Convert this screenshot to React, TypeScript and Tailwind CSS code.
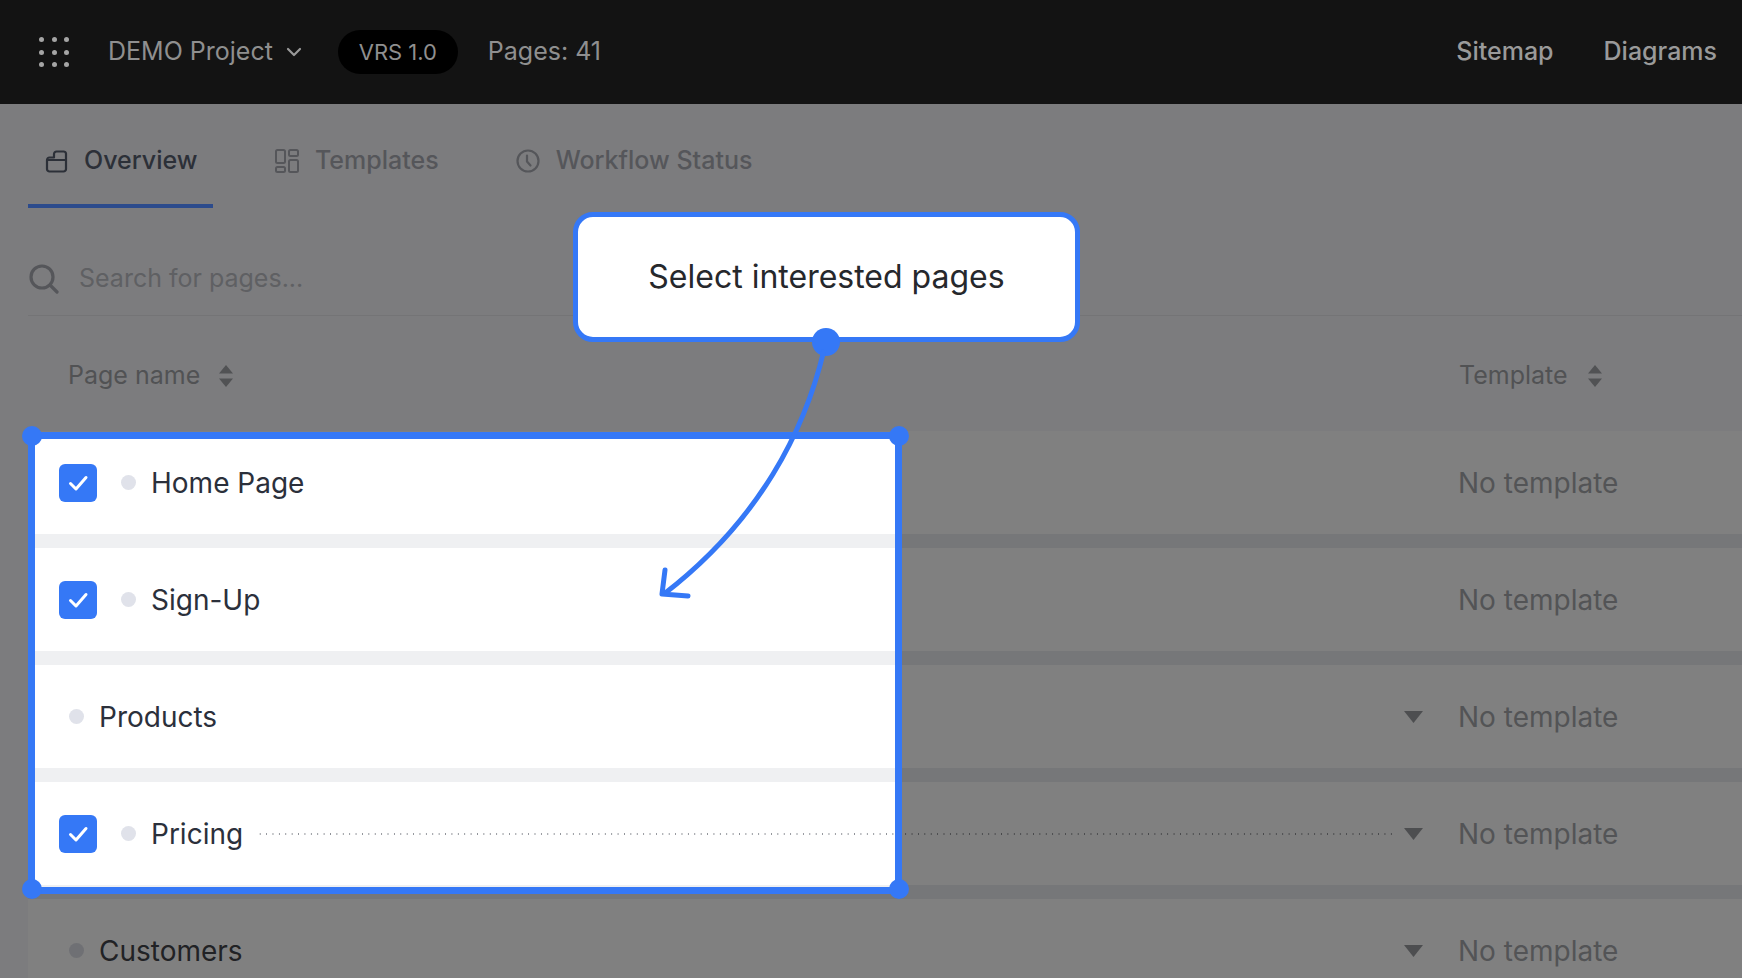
import React from "react";

interface Page {
  name: string;
  checked?: boolean;
  caret?: boolean;
  dotted?: boolean;
}

const pages: Page[] = [
  { name: "Home Page", checked: true },
  { name: "Sign-Up", checked: true },
  { name: "Products", caret: true },
  { name: "Pricing", checked: true, caret: true, dotted: true },
  { name: "Customers", caret: true },
];

const SortIcon = () => (
  <svg width="16" height="24" viewBox="0 0 16 24" className="fill-[#515254]">
    <path d="M8 1 15 9.500H1Z" />
    <path d="M8 23 15 14.500H1Z" />
  </svg>
);

const Check = () => (
  <svg width="24" height="24" viewBox="0 0 24 24" fill="none" stroke="white" strokeWidth="3" strokeLinecap="round" strokeLinejoin="round">
    <path d="M4.500 12.500 10 18 20 6.500" />
  </svg>
);

const Rows = ({ lit }: { lit?: boolean }) => (
  <div className="flex flex-col">
    {pages.map((p) => (
      <div
        key={p.name}
        className={`flex h-[117px] items-center border-b-[14px] text-[28px] ${
          lit
            ? "border-[#eff0f2] bg-white text-[#2b303b]"
            : "border-[#767779] bg-[#808080] text-[#212225]"
        }`}
      >
        {p.checked && (
          <div className="ml-[31px] mr-[24px] flex h-[38px] w-[38px] items-center justify-center rounded-[6px] bg-[#3578f6]">
            <Check />
          </div>
        )}
        <div
          className={`h-[15px] w-[15px] rounded-full ${p.checked ? "" : "ml-[41px]"} ${
            lit ? "bg-[#e0e2ea]" : "bg-[#6f7074]"
          }`}
        />
        <span className="ml-[8px] pl-[7px]">{p.name}</span>
        {p.dotted ? (
          <div
            className={`ml-[14px] mr-[12px] h-[2px] flex-1 bg-[length:6.400px_2px] ${
              lit
                ? "bg-[radial-gradient(circle,#8d9096_1px,transparent_1px)]"
                : "bg-[radial-gradient(circle,#47484a_1px,transparent_1px)]"
            }`}
          />
        ) : (
          <div className="flex-1" />
        )}
        {p.caret && (
          <svg width="19" height="12" viewBox="0 0 19 12" className="fill-[#4d4e50]">
            <path d="M0 0H19L9.500 12Z" />
          </svg>
        )}
        <span className={`ml-[35px] w-[284px] ${lit ? "text-[#9a9a9a]" : "text-[#535456]"}`}>No template</span>
      </div>
    ))}
  </div>
);

export default function App() {
  return (
    <div className="relative h-[978px] w-[1742px] overflow-hidden bg-[#7c7c7e] font-['Inter',sans-serif]">
      {/* top bar */}
      <header className="flex h-[104px] items-center bg-[#131313] text-[25px]">
        <div className="ml-[39px] grid grid-cols-3 gap-[7.500px]">
          {Array.from({ length: 9 }).map((_, i) => (
            <span key={i} className="h-[5px] w-[5px] rounded-full bg-[#a5a5a5]" />
          ))}
        </div>
        <span className="ml-[39px] text-[#8f8f8f]">DEMO Project</span>
        <svg width="16" height="10" viewBox="0 0 16 10" fill="none" stroke="#999" strokeWidth="2.200" strokeLinecap="round" strokeLinejoin="round" className="ml-[13px]">
          <path d="M2 2 8 8 14 2" />
        </svg>
        <div className="ml-[36px] flex h-[44px] w-[120px] items-center justify-center rounded-full bg-black text-[22px] text-[#8f8f8f]">
          VRS 1.0
        </div>
        <span className="ml-[30px] text-[#8f8f8f]">Pages: 41</span>
        <span className="ml-auto font-medium text-[#9a9a9a]">Sitemap</span>
        <span className="ml-[50px] mr-[25px] font-medium text-[#9a9a9a]">Diagrams</span>
      </header>

      {/* tabs */}
      <nav className="flex h-[104px] pl-[28px] text-[25px] font-medium">
        <div className="flex w-[185px] items-center border-b-4 border-[#2c4b8c] pl-[17px] pt-[14px] text-[#2c3038]">
          <svg width="23" height="23" viewBox="0 0 23 23" fill="none" stroke="#2c3038" strokeWidth="2.200" strokeLinejoin="round">
            <path d="M2 10V19A2.500 2.500 0 0 0 4.500 21.500H18.500A2.500 2.500 0 0 0 21 19V3.500A2.500 2.500 0 0 0 18.500 1.500H11.500A2.500 2.500 0 0 0 9 4V7.500H4.500A2.500 2.500 0 0 0 2 10ZM2 10H21" />
          </svg>
          <span className="ml-[16px]">Overview</span>
        </div>
        <div className="ml-[62px] flex items-center pb-[4px] pt-[14px] text-[#55565a]">
          <svg width="24" height="24" viewBox="0 0 24 24" fill="none" stroke="#55565a" strokeWidth="2">
            <rect x="1" y="1" width="9" height="13" rx="1.500" />
            <rect x="14" y="1" width="9" height="6" rx="1.500" />
            <rect x="14" y="11" width="9" height="12" rx="1.500" />
            <rect x="1" y="18" width="9" height="5" rx="1.500" />
          </svg>
          <span className="ml-[16px]">Templates</span>
        </div>
        <div className="ml-[77px] flex items-center pb-[4px] pt-[14px] text-[#55565a]">
          <svg width="24" height="24" viewBox="0 0 24 24" fill="none" stroke="#55565a" strokeWidth="2.200" strokeLinecap="round" strokeLinejoin="round">
            <circle cx="12" cy="12" r="10.500" />
            <path d="M11 6.500V12.500L14.500 16.500" />
          </svg>
          <span className="ml-[16px]">Workflow Status</span>
        </div>
      </nav>

      {/* search */}
      <div className="ml-[28px] flex h-[108px] items-center border-b border-[#747476] pt-[34px] text-[25px] text-[#5f6063]">
        <svg width="30" height="30" viewBox="0 0 30 30" fill="none" stroke="#55565a" strokeWidth="3.200" strokeLinecap="round" className="ml-[1px]">
          <circle cx="13" cy="13" r="11" />
          <path d="M21.500 21.500 28 28" />
        </svg>
        <span className="ml-[20px]">Search for pages...</span>
      </div>

      {/* table head */}
      <div className="ml-[28px] flex h-[115px] items-center pt-[5px] text-[25px] text-[#515254]">
        <span className="ml-[40px]">Page name</span>
        <span className="ml-[18px]">
          <SortIcon />
        </span>
        <span className="ml-auto w-[283px]">
          <span className="inline-flex items-center gap-[19px]">
            Template
            <SortIcon />
          </span>
        </span>
      </div>

      <div className="ml-[28px]">
        <Rows />
      </div>

      {/* highlighted rows */}
      <div className="absolute left-[28px] top-[432px] h-[462px] w-[874px] overflow-hidden border-[7px] border-[#3578f6]">
        <div className="-ml-[7px] -mt-[8px] w-[1714px]">
          <Rows lit />
        </div>
      </div>
      <span className="absolute left-[22px] top-[426px] h-[20px] w-[20px] rounded-full bg-[#3578f6]" />
      <span className="absolute left-[889px] top-[426px] h-[20px] w-[20px] rounded-full bg-[#3578f6]" />
      <span className="absolute left-[22px] top-[879px] h-[20px] w-[20px] rounded-full bg-[#3578f6]" />
      <span className="absolute left-[889px] top-[879px] h-[20px] w-[20px] rounded-full bg-[#3578f6]" />

      {/* callout */}
      <div className="absolute left-[573px] top-[212px] flex h-[130px] w-[507px] items-center justify-center rounded-[20px] border-[5px] border-[#3578f6] bg-white text-[32px] text-[#26282c]">
        Select interested pages
      </div>
      <svg width="1742" height="978" viewBox="0 0 1742 978" fill="none" className="pointer-events-none absolute left-0 top-0">
        <circle cx="826" cy="342" r="14" fill="#3578f6" />
        <path d="M824 350C805 430 760 520 664 594" stroke="#3578f6" strokeWidth="5" />
        <path d="M665 570 662 594 688 596" stroke="#3578f6" strokeWidth="5" strokeLinecap="round" strokeLinejoin="round" />
      </svg>
    </div>
  );
}
